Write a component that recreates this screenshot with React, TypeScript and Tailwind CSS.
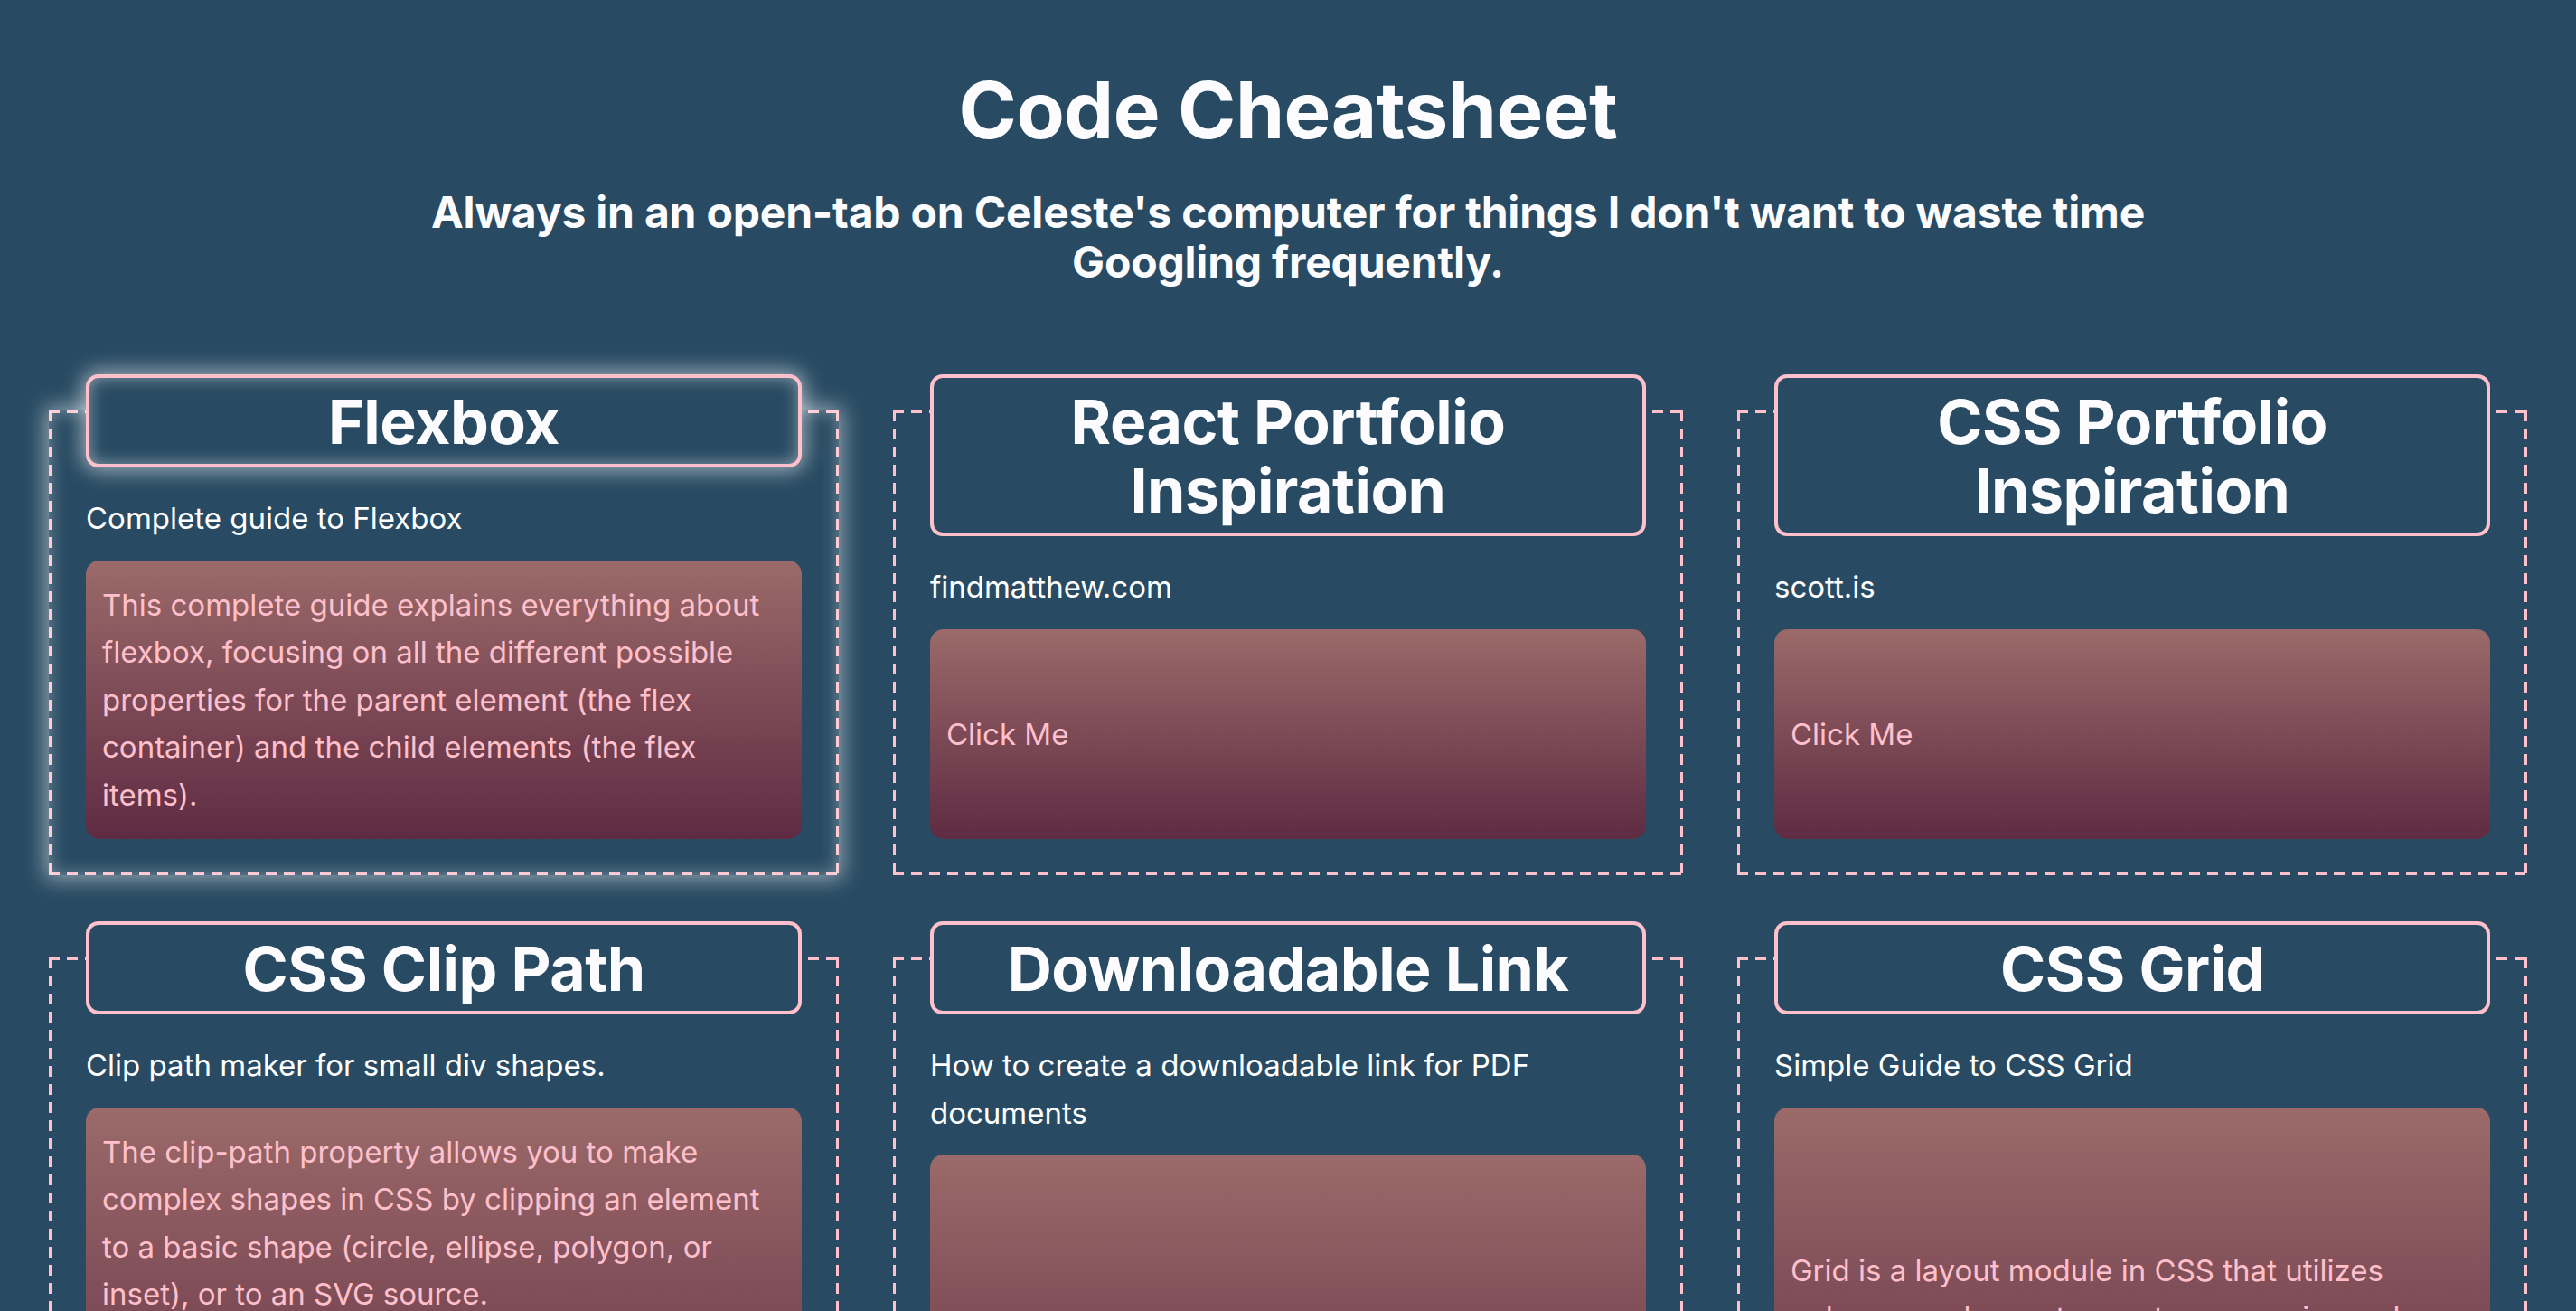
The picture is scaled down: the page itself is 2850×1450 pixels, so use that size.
import React from "react";

type Sheet = {
    title: string;
    description: string;
    body: string[];
    active?: boolean;
};

const sheets: Sheet[] = [
    {
        title: "Flexbox",
        description: "Complete guide to Flexbox",
        body: [
            "This complete guide explains everything about flexbox, focusing on all the different possible properties for the parent element (the flex container) and the child elements (the flex items).",
        ],
        active: true,
    },
    {
        title: "React Portfolio Inspiration",
        description: "findmatthew.com",
        body: ["Click Me"],
    },
    {
        title: "CSS Portfolio Inspiration",
        description: "scott.is",
        body: ["Click Me"],
    },
    {
        title: "CSS Clip Path",
        description: "Clip path maker for small div shapes.",
        body: [
            "The clip-path property allows you to make complex shapes in CSS by clipping an element to a basic shape (circle, ellipse, polygon, or inset), or to an SVG source.",
            "With CSS transitions and animations, a clip-path can also be animated between two shapes, as long as both shapes have the same number of points.",
        ],
    },
    {
        title: "Downloadable Link",
        description: "How to create a downloadable link for PDF documents",
        body: ["Click Me"],
    },
    {
        title: "CSS Grid",
        description: "Simple Guide to CSS Grid",
        body: ["Grid is a layout module in CSS that utilizes columns and rows to create responsive web layouts."],
    },
];

// dashed pink frame drawn with repeating gradients so the dash length matches
const dashed =
    "[background-image:linear-gradient(to_right,#ffc0cb_60%,transparent_60%),linear-gradient(to_right,#ffc0cb_60%,transparent_60%),linear-gradient(to_bottom,#ffc0cb_60%,transparent_60%),linear-gradient(to_bottom,#ffc0cb_60%,transparent_60%)] [background-size:20px_3px,20px_3px,3px_20px,3px_20px] [background-position:0_0,0_100%,0_0,100%_0] [background-repeat:repeat-x,repeat-x,repeat-y,repeat-y]";

function SheetCard({ sheet }: { sheet: Sheet }) {
    return (
        <div
            className={
                sheet.active
                    ? `flex flex-col px-[41px] pb-[40px] ${dashed} shadow-[0_0_22px_4px_rgba(255,255,255,0.5),inset_0_0_20px_rgba(255,255,255,0.4)]`
                    : `flex flex-col px-[41px] pb-[40px] ${dashed}`
            }
        >
            {/* heading sits over the dashed top edge */}
            <h3
                className={
                    sheet.active
                        ? "-mt-[40px] rounded-[14px] border-4 border-[#ffc0cb] bg-[#284b63] px-[16px] py-[9.5px] text-center text-[68px] font-bold leading-[76px] tracking-[-0.5px] text-[#fcfcff] shadow-[0_0_22px_4px_rgba(255,255,255,0.55),inset_0_0_18px_rgba(255,255,255,0.45)]"
                        : "-mt-[40px] rounded-[14px] border-4 border-[#ffc0cb] bg-[#284b63] px-[16px] py-[9.5px] text-center text-[68px] font-bold leading-[76px] tracking-[-0.5px] text-[#fcfcff]"
                }
            >
                {sheet.title}
            </h3>
            <p className="mt-[30px] text-[33px] leading-[52.5px] text-white">{sheet.description}</p>
            <div className="mt-[20px] flex flex-1 items-center rounded-[15px] bg-linear-to-b from-[#9b6a69] to-[#5f2b43] px-[18px] py-[23px] text-[33px] leading-[52.5px] text-[#ffc0cb]">
                <div>
                    {sheet.body.map((para) => (
                        <p key={para}>{para}</p>
                    ))}
                </div>
            </div>
        </div>
    );
}

export default function App() {
    return (
        <div className="min-h-screen bg-[#284b63] font-['Inter','Noto_Sans',sans-serif] text-white">
            <header className="pt-[70px] text-center">
                <h1 className="text-[87px] font-bold leading-[104px] tracking-[-0.5px] text-[#fcfcff]">Code Cheatsheet</h1>
                <h2 className="mx-auto mt-[34px] max-w-[2000px] text-[48px] font-bold leading-[54.5px] tracking-[-0.2px] text-[#fcfcff]">
                    Always in an open-tab on Celeste's computer for things I don't want to waste time Googling frequently.
                </h2>
            </header>

            <main className="grid grid-cols-3 gap-x-[60px] gap-y-[91px] px-[54px] pt-[137px] pb-[80px]">
                {sheets.map((sheet) => (
                    <SheetCard sheet={sheet} key={sheet.title} />
                ))}
            </main>
        </div>
    );
}
